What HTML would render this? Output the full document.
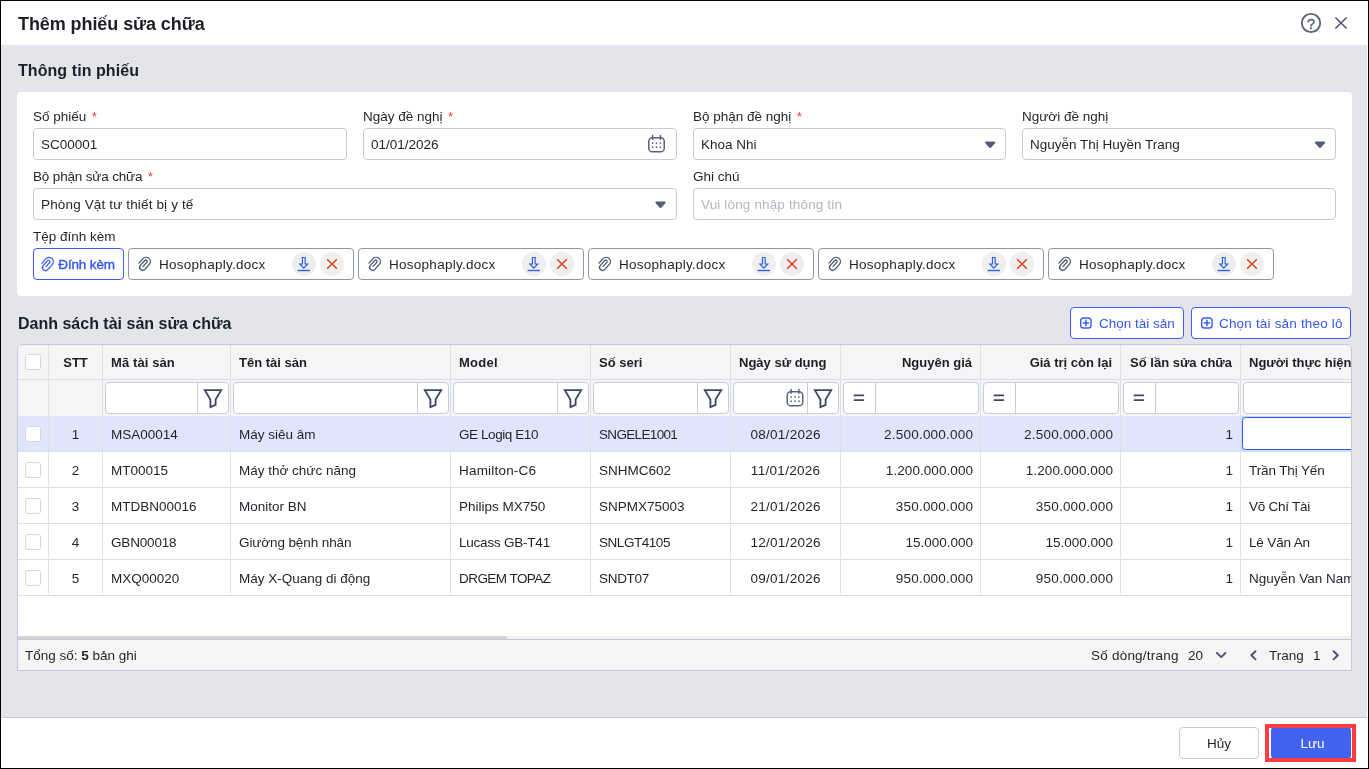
<!DOCTYPE html>
<html lang="vi">
<head>
<meta charset="utf-8">
<title>Thêm phiếu sửa chữa</title>
<style>
*{box-sizing:border-box;margin:0;padding:0}
html,body{width:1369px;height:769px;overflow:hidden;background:#fff}
body{font-family:"Liberation Sans",sans-serif;font-size:13.5px;color:#1f222b;position:relative}
.a{position:absolute}
svg{position:absolute;overflow:visible}
.frame{position:absolute;left:0;top:0;width:1369px;height:769px;border:1px solid #000;border-bottom-width:1px;pointer-events:none;z-index:50}
.title{position:absolute;left:18px;top:2px;height:44px;line-height:44px;font-size:18px;font-weight:bold;color:#1c1f26;white-space:nowrap;letter-spacing:-0.08px}
.gbody{position:absolute;left:1px;top:45px;width:1366px;height:673px;background:#e3e5ea;border-bottom:1px solid #c6cad6}
.sect{position:absolute;left:18px;margin-top:1px;font-size:16px;font-weight:bold;color:#1c1f26;white-space:nowrap;line-height:20px}
.card{position:absolute;left:17px;top:92px;width:1335px;height:204px;background:#fff;border-radius:4px}
.lbl{position:absolute;margin-top:1px;height:16px;line-height:16px;white-space:nowrap;color:#1f222b}
.lbl i{font-style:normal;color:#ee3b3b;margin-left:5.5px}
.inp{position:absolute;height:32px;border:1px solid #c7ccd9;border-radius:4px;background:#fff;line-height:30px;padding-left:7px;padding-top:1px;white-space:nowrap}
.ph{color:#b3b7c2}
.btn-o{position:absolute;height:32px;border:1px solid #3d5ef5;border-radius:4px;background:#fff;color:#3557ee;line-height:30px;white-space:nowrap}
.chip{position:absolute;top:248px;width:226px;height:32px;border:1px solid #8e96ae;border-radius:4px;background:#fff;line-height:30px;white-space:nowrap}
.chip .nm{position:absolute;left:30px;top:1px}
.chip .c1,.chip .c2{position:absolute;top:3px;width:24px;height:24px;border-radius:12px;background:#efefef}
.chip .c1{left:163px}.chip .c2{left:191px}
.btn{position:absolute;height:32px;border-radius:4px;text-align:center;line-height:30px;padding-top:1px}

.tbl{position:absolute;left:17px;top:344px;width:1335px;height:327px;border:1px solid #c3c9d6;border-radius:6px 6px 0 0;background:#fff;overflow:hidden}
.tbl>div{position:absolute}
.thbg{left:0;top:0;width:1335px;height:71px;background:#f5f5f5}
.selbg{left:0;top:71px;width:1335px;height:35px;background:#e1e5fb}
.hl{left:0;width:1335px;height:1px;background:#dbdfe9}
.hl.hd{background:#d9dde6}
.vl{top:0;width:1px;height:251px;background:#dee1e9}
.c{white-space:nowrap;overflow:hidden;padding-top:1px}
.tl{padding-left:8px;text-align:left}.tr{padding-right:7px;text-align:right}.tc{text-align:center}
.th{font-weight:bold;color:#1c1f26;font-size:13px}
.th.tr{padding-right:8px}
.cb{width:16px;height:16px;border:1px solid #d3d7e1;border-radius:2.5px;background:#fff}
.fi{height:32px;border:1px solid #c7ccd9;border-radius:4px;background:#fff}
.fi .dv{position:absolute;top:0;width:1px;height:30px;background:#c7ccd9}
.actbg{width:200px;height:35px;background:#c6defb}
.act{width:200px;height:33px;border:1.5px solid #3156ea;border-radius:3.5px;background:#fff}
.sbt{left:0;width:1335px;height:3px;background:#f0f0f1}
.sbh{left:0;width:489px;height:3px;background:#d2d2d2}
.tf{left:0;width:1335px;height:31px;border-top:1px solid #c3c9d6;background:#f5f5f5;line-height:31px;white-space:nowrap}
#root{position:absolute;left:0;top:0;width:1369px;height:769px;will-change:transform}
</style>
</head>
<body>
<div id="root">
<div class="title">Thêm phiếu sửa chữa</div>
<div class="gbody"></div>
<div class="sect" style="top:60px;letter-spacing:0.07px">Thông tin phiếu</div>
<div class="card"></div>
<!--FORM-->
<div class="lbl" style="left:33px;top:108px">Số phiếu<i>*</i></div>
<div class="lbl" style="left:363px;top:108px">Ngày đề nghị<i>*</i></div>
<div class="lbl" style="left:693px;top:108px">Bộ phận đề nghị<i>*</i></div>
<div class="lbl" style="left:1022px;top:108px">Người đề nghị</div>
<div class="inp" style="left:33px;top:128px;width:314px">SC00001</div>
<div class="inp" style="left:363px;top:128px;width:314px">01/01/2026</div>
<div class="inp" style="left:693px;top:128px;width:313px">Khoa Nhi</div>
<div class="inp" style="left:1022px;top:128px;width:314px">Nguyễn Thị Huyền Trang</div>
<div class="lbl" style="left:33px;top:168px;letter-spacing:-0.16px">Bộ phận sửa chữa<i>*</i></div>
<div class="lbl" style="left:693px;top:168px">Ghi chú</div>
<div class="inp" style="left:33px;top:188px;width:644px;letter-spacing:0.15px">Phòng Vật tư thiết bị y tế</div>
<div class="inp ph" style="left:693px;top:188px;width:643px;letter-spacing:0.15px">Vui lòng nhập thông tin</div>
<div class="lbl" style="left:33px;top:228px">Tệp đính kèm</div>
<div class="btn-o" style="left:33px;top:248px;width:91px;-webkit-text-stroke:0.4px #3557ee;letter-spacing:-0.15px"><span class="a" style="left:24.3px;top:1px">Đính kèm</span></div>
<div class="chip" style="left:128px"><span class="nm" style="letter-spacing:0.27px">Hosophaply.docx</span><span class="c1"></span><span class="c2"></span></div>
<div class="chip" style="left:358px"><span class="nm" style="letter-spacing:0.27px">Hosophaply.docx</span><span class="c1"></span><span class="c2"></span></div>
<div class="chip" style="left:588px"><span class="nm" style="letter-spacing:0.27px">Hosophaply.docx</span><span class="c1"></span><span class="c2"></span></div>
<div class="chip" style="left:818px"><span class="nm" style="letter-spacing:0.27px">Hosophaply.docx</span><span class="c1"></span><span class="c2"></span></div>
<div class="chip" style="left:1048px"><span class="nm" style="letter-spacing:0.27px">Hosophaply.docx</span><span class="c1"></span><span class="c2"></span></div>
<!--/FORM-->
<!--TABLE-->
<div class="sect" style="top:313px">Danh sách tài sản sửa chữa</div>
<div class="btn-o" style="left:1070px;top:307px;width:114px"><span class="a" style="left:28px;top:1px">Chọn tài sản</span></div>
<div class="btn-o" style="left:1191px;top:307px;width:160px"><span class="a" style="left:27px;top:1px;letter-spacing:0.18px">Chọn tài sản theo lô</span></div>
<div class="tbl">
<div class="thbg"></div>
<div class="selbg"></div>
<div class="hl hd" style="top:34px"></div>
<div class="hl" style="top:106px"></div>
<div class="hl" style="top:142px"></div>
<div class="hl" style="top:178px"></div>
<div class="hl" style="top:214px"></div>
<div class="hl" style="top:250px"></div>
<div class="vl" style="left:30px"></div>
<div class="vl" style="left:84px"></div>
<div class="vl" style="left:212px"></div>
<div class="vl" style="left:432px"></div>
<div class="vl" style="left:572px"></div>
<div class="vl" style="left:712px"></div>
<div class="vl" style="left:822px"></div>
<div class="vl" style="left:962px"></div>
<div class="vl" style="left:1102px"></div>
<div class="vl" style="left:1222px"></div>
<div class="c th tc" style="left:31px;top:0px;width:53px;height:34px;line-height:34px">STT</div>
<div class="c th tl" style="left:85px;top:0px;width:127px;height:34px;line-height:34px;letter-spacing:0.1px">Mã tài sản</div>
<div class="c th tl" style="left:213px;top:0px;width:219px;height:34px;line-height:34px">Tên tài sản</div>
<div class="c th tl" style="left:433px;top:0px;width:139px;height:34px;line-height:34px;letter-spacing:0.25px">Model</div>
<div class="c th tl" style="left:573px;top:0px;width:139px;height:34px;line-height:34px">Số seri</div>
<div class="c th tl" style="left:713px;top:0px;width:109px;height:34px;line-height:34px">Ngày sử dụng</div>
<div class="c th tr" style="left:823px;top:0px;width:139px;height:34px;line-height:34px">Nguyên giá</div>
<div class="c th tr" style="left:963px;top:0px;width:139px;height:34px;line-height:34px">Giá trị còn lại</div>
<div class="c th tr" style="left:1103px;top:0px;width:119px;height:34px;line-height:34px">Số lần sửa chữa</div>
<div class="c th tl" style="left:1223px;top:0px;width:159px;height:34px;line-height:34px">Người thực hiện</div>
<div class="cb" style="left:7px;top:9px"></div>
<div class="cb" style="left:7px;top:81px"></div>
<div class="c td tc" style="left:31px;top:71px;width:53px;height:35px;line-height:35px">1</div>
<div class="c td tl" style="left:85px;top:71px;width:127px;height:35px;line-height:35px">MSA00014</div>
<div class="c td tl" style="left:213px;top:71px;width:219px;height:35px;line-height:35px">Máy siêu âm</div>
<div class="c td tl" style="left:433px;top:71px;width:139px;height:35px;line-height:35px;letter-spacing:-0.42px">GE Logiq E10</div>
<div class="c td tl" style="left:573px;top:71px;width:139px;height:35px;line-height:35px;letter-spacing:-0.66px">SNGELE1001</div>
<div class="c td tc" style="left:713px;top:71px;width:109px;height:35px;line-height:35px;letter-spacing:0.28px;padding-left:0.28px">08/01/2026</div>
<div class="c td tr" style="left:823px;top:71px;width:139px;height:35px;line-height:35px;letter-spacing:0.22px;padding-right:6.78px">2.500.000.000</div>
<div class="c td tr" style="left:963px;top:71px;width:139px;height:35px;line-height:35px;letter-spacing:0.22px;padding-right:6.78px">2.500.000.000</div>
<div class="c td tr" style="left:1103px;top:71px;width:119px;height:35px;line-height:35px">1</div>
<div class="cb" style="left:7px;top:117px"></div>
<div class="c td tc" style="left:31px;top:107px;width:53px;height:35px;line-height:35px">2</div>
<div class="c td tl" style="left:85px;top:107px;width:127px;height:35px;line-height:35px">MT00015</div>
<div class="c td tl" style="left:213px;top:107px;width:219px;height:35px;line-height:35px">Máy thở chức năng</div>
<div class="c td tl" style="left:433px;top:107px;width:139px;height:35px;line-height:35px;letter-spacing:0.2px">Hamilton-C6</div>
<div class="c td tl" style="left:573px;top:107px;width:139px;height:35px;line-height:35px">SNHMC602</div>
<div class="c td tc" style="left:713px;top:107px;width:109px;height:35px;line-height:35px;letter-spacing:0.3px;padding-left:0.30px">11/01/2026</div>
<div class="c td tr" style="left:823px;top:107px;width:139px;height:35px;line-height:35px;letter-spacing:0.07px;padding-right:6.93px">1.200.000.000</div>
<div class="c td tr" style="left:963px;top:107px;width:139px;height:35px;line-height:35px;letter-spacing:0.07px;padding-right:6.93px">1.200.000.000</div>
<div class="c td tr" style="left:1103px;top:107px;width:119px;height:35px;line-height:35px">1</div>
<div class="c td tl" style="left:1223px;top:107px;width:159px;height:35px;line-height:35px;letter-spacing:-0.12px">Trần Thị Yến</div>
<div class="cb" style="left:7px;top:153px"></div>
<div class="c td tc" style="left:31px;top:143px;width:53px;height:35px;line-height:35px">3</div>
<div class="c td tl" style="left:85px;top:143px;width:127px;height:35px;line-height:35px">MTDBN00016</div>
<div class="c td tl" style="left:213px;top:143px;width:219px;height:35px;line-height:35px">Monitor BN</div>
<div class="c td tl" style="left:433px;top:143px;width:139px;height:35px;line-height:35px">Philips MX750</div>
<div class="c td tl" style="left:573px;top:143px;width:139px;height:35px;line-height:35px">SNPMX75003</div>
<div class="c td tc" style="left:713px;top:143px;width:109px;height:35px;line-height:35px;letter-spacing:0.28px;padding-left:0.28px">21/01/2026</div>
<div class="c td tr" style="left:823px;top:143px;width:139px;height:35px;line-height:35px;letter-spacing:0.22px;padding-right:6.78px">350.000.000</div>
<div class="c td tr" style="left:963px;top:143px;width:139px;height:35px;line-height:35px;letter-spacing:0.22px;padding-right:6.78px">350.000.000</div>
<div class="c td tr" style="left:1103px;top:143px;width:119px;height:35px;line-height:35px">1</div>
<div class="c td tl" style="left:1223px;top:143px;width:159px;height:35px;line-height:35px;letter-spacing:-0.26px">Võ Chí Tài</div>
<div class="cb" style="left:7px;top:189px"></div>
<div class="c td tc" style="left:31px;top:179px;width:53px;height:35px;line-height:35px">4</div>
<div class="c td tl" style="left:85px;top:179px;width:127px;height:35px;line-height:35px;letter-spacing:-0.17px">GBN00018</div>
<div class="c td tl" style="left:213px;top:179px;width:219px;height:35px;line-height:35px;letter-spacing:-0.1px">Giường bệnh nhân</div>
<div class="c td tl" style="left:433px;top:179px;width:139px;height:35px;line-height:35px;letter-spacing:-0.22px">Lucass GB-T41</div>
<div class="c td tl" style="left:573px;top:179px;width:139px;height:35px;line-height:35px;letter-spacing:-0.45px">SNLGT4105</div>
<div class="c td tc" style="left:713px;top:179px;width:109px;height:35px;line-height:35px;letter-spacing:0.28px;padding-left:0.28px">12/01/2026</div>
<div class="c td tr" style="left:823px;top:179px;width:139px;height:35px;line-height:35px">15.000.000</div>
<div class="c td tr" style="left:963px;top:179px;width:139px;height:35px;line-height:35px">15.000.000</div>
<div class="c td tr" style="left:1103px;top:179px;width:119px;height:35px;line-height:35px">1</div>
<div class="c td tl" style="left:1223px;top:179px;width:159px;height:35px;line-height:35px;letter-spacing:-0.15px">Lê Văn An</div>
<div class="cb" style="left:7px;top:225px"></div>
<div class="c td tc" style="left:31px;top:215px;width:53px;height:35px;line-height:35px">5</div>
<div class="c td tl" style="left:85px;top:215px;width:127px;height:35px;line-height:35px">MXQ00020</div>
<div class="c td tl" style="left:213px;top:215px;width:219px;height:35px;line-height:35px">Máy X-Quang di động</div>
<div class="c td tl" style="left:433px;top:215px;width:139px;height:35px;line-height:35px;letter-spacing:-0.55px">DRGEM TOPAZ</div>
<div class="c td tl" style="left:573px;top:215px;width:139px;height:35px;line-height:35px;letter-spacing:-0.3px">SNDT07</div>
<div class="c td tc" style="left:713px;top:215px;width:109px;height:35px;line-height:35px;letter-spacing:0.28px;padding-left:0.28px">09/01/2026</div>
<div class="c td tr" style="left:823px;top:215px;width:139px;height:35px;line-height:35px;letter-spacing:0.22px;padding-right:6.78px">950.000.000</div>
<div class="c td tr" style="left:963px;top:215px;width:139px;height:35px;line-height:35px;letter-spacing:0.22px;padding-right:6.78px">950.000.000</div>
<div class="c td tr" style="left:1103px;top:215px;width:119px;height:35px;line-height:35px">1</div>
<div class="c td tl" style="left:1223px;top:215px;width:159px;height:35px;line-height:35px">Nguyễn Van Nam</div>
<div class="fi" style="left:87px;top:37px;width:124px"><span class="dv" style="left:91px"></span></div>
<div class="fi" style="left:215px;top:37px;width:216px"><span class="dv" style="left:183px"></span></div>
<div class="fi" style="left:435px;top:37px;width:136px"><span class="dv" style="left:103px"></span></div>
<div class="fi" style="left:575px;top:37px;width:136px"><span class="dv" style="left:103px"></span></div>
<div class="fi" style="left:715px;top:37px;width:106px"><span class="dv" style="left:73px"></span></div>
<div class="fi" style="left:825px;top:37px;width:136px"><span class="dv" style="left:31px"></span></div>
<div class="fi" style="left:965px;top:37px;width:136px"><span class="dv" style="left:31px"></span></div>
<div class="fi" style="left:1105px;top:37px;width:116px"><span class="dv" style="left:31px"></span></div>
<div class="fi" style="left:1225px;top:37px;width:200px"></div>
<div class="actbg" style="left:1223px;top:71px"></div>
<div class="act" style="left:1224px;top:72px"></div>
<div class="sbt" style="top:291px"></div><div class="sbh" style="top:291px"></div>
<div class="tf" style="top:294px"><span class="a" style="left:7px">Tổng số: <b>5</b> bản ghi</span><span class="a" style="left:1073px;letter-spacing:0.22px">Số dòng/trang</span><span class="a" style="left:1170px">20</span><span class="a" style="left:1251px">Trang</span><span class="a" style="left:1295px">1</span></div>
</div>
<!--/TABLE-->
<!--FOOT-->
<div class="btn" style="left:1179px;top:727px;width:80px;border:1px solid #c7ccd9;background:#fff;color:#1f222b">Hủy</div>
<div class="btn" style="left:1271px;top:727px;width:80px;background:#4262f0;color:#fff;line-height:32px;padding-left:3px">Lưu</div>
<div class="a" style="left:1265px;top:724px;width:91px;height:38px;border:4px solid #fb3c40"></div>
<svg class="ov" width="1369" height="769" viewBox="0 0 1369 769" style="left:0;top:0;z-index:20" fill="none">
<circle cx="1311" cy="23" r="9.2" stroke="#5b6271" stroke-width="1.8"/>
<text x="1311" y="28.6" text-anchor="middle" font-family="Liberation Sans, sans-serif" font-size="14.5" fill="#5b6271" stroke="#5b6271" stroke-width="0.4">?</text>
<path d="M1335.4 17.4l11.2 11.2M1346.6 17.4l-11.2 11.2" stroke="#474e66" stroke-width="1.4"/>
<g transform="translate(648 137)"><g stroke="#59627d" stroke-width="1.5" stroke-linecap="round"><rect x="0.75" y="0.75" width="15.5" height="14" rx="3.6"/><path d="M4.6-1.4v3.6M12.4-1.4v3.6"/><path stroke-width="1.7" d="M4.6 6.1h.01M8.5 6.1h.01M12.4 6.1h.01M4.6 10.2h.01M8.5 10.2h.01M12.4 10.2h.01"/></g></g>
<g transform="translate(786.5 391)"><g stroke="#59627d" stroke-width="1.5" stroke-linecap="round"><rect x="0.75" y="0.75" width="15.5" height="14" rx="3.6"/><path d="M4.6-1.4v3.6M12.4-1.4v3.6"/><path stroke-width="1.7" d="M4.6 6.1h.01M8.5 6.1h.01M12.4 6.1h.01M4.6 10.2h.01M8.5 10.2h.01M12.4 10.2h.01"/></g></g>
<g transform="translate(990.2 144.7)"><path d="M-4.1-2.2h8.2L0 2.3z" fill="#555e77" stroke="#555e77" stroke-width="2" stroke-linejoin="round"/></g>
<g transform="translate(1320 144.7)"><path d="M-4.1-2.2h8.2L0 2.3z" fill="#555e77" stroke="#555e77" stroke-width="2" stroke-linejoin="round"/></g>
<g transform="translate(660.5 204.7)"><path d="M-4.1-2.2h8.2L0 2.3z" fill="#555e77" stroke="#555e77" stroke-width="2" stroke-linejoin="round"/></g>
<g transform="translate(47.2 263.8)" stroke="#3d5ef5"><path transform="rotate(42)" d="M-4.25 3.2V-2.8A4.25 4.25 0 0 1 4.25-2.8V3.9A3 3 0 0 1-1.75 3.9V-2.6A1.375 1.375 0 0 1 1-2.6V2.9" stroke-width="1.25" stroke-linecap="round"/></g>
<g transform="translate(144.3 263.6)" stroke="#4a5270"><path transform="rotate(42)" d="M-4.25 3.2V-2.8A4.25 4.25 0 0 1 4.25-2.8V3.9A3 3 0 0 1-1.75 3.9V-2.6A1.375 1.375 0 0 1 1-2.6V2.9" stroke-width="1.25" stroke-linecap="round"/></g>
<g transform="translate(303.8 264)"><g stroke="#2f60e6" stroke-width="1.2" stroke-linejoin="miter"><path d="M-1.35-6.5h2.7v6.5h2.6L0 4.2-3.95 0h2.6z"/><path d="M-6.2 6.5H6.2" stroke-width="1.4"/></g></g>
<g transform="translate(332 264)"><path d="M-4.8-4.8l9.6 9.6M4.8-4.8l-9.6 9.6" stroke="#e0391b" stroke-width="1.4"/></g>
<g transform="translate(374.3 263.6)" stroke="#4a5270"><path transform="rotate(42)" d="M-4.25 3.2V-2.8A4.25 4.25 0 0 1 4.25-2.8V3.9A3 3 0 0 1-1.75 3.9V-2.6A1.375 1.375 0 0 1 1-2.6V2.9" stroke-width="1.25" stroke-linecap="round"/></g>
<g transform="translate(533.8 264)"><g stroke="#2f60e6" stroke-width="1.2" stroke-linejoin="miter"><path d="M-1.35-6.5h2.7v6.5h2.6L0 4.2-3.95 0h2.6z"/><path d="M-6.2 6.5H6.2" stroke-width="1.4"/></g></g>
<g transform="translate(562 264)"><path d="M-4.8-4.8l9.6 9.6M4.8-4.8l-9.6 9.6" stroke="#e0391b" stroke-width="1.4"/></g>
<g transform="translate(604.3 263.6)" stroke="#4a5270"><path transform="rotate(42)" d="M-4.25 3.2V-2.8A4.25 4.25 0 0 1 4.25-2.8V3.9A3 3 0 0 1-1.75 3.9V-2.6A1.375 1.375 0 0 1 1-2.6V2.9" stroke-width="1.25" stroke-linecap="round"/></g>
<g transform="translate(763.8 264)"><g stroke="#2f60e6" stroke-width="1.2" stroke-linejoin="miter"><path d="M-1.35-6.5h2.7v6.5h2.6L0 4.2-3.95 0h2.6z"/><path d="M-6.2 6.5H6.2" stroke-width="1.4"/></g></g>
<g transform="translate(792 264)"><path d="M-4.8-4.8l9.6 9.6M4.8-4.8l-9.6 9.6" stroke="#e0391b" stroke-width="1.4"/></g>
<g transform="translate(834.3 263.6)" stroke="#4a5270"><path transform="rotate(42)" d="M-4.25 3.2V-2.8A4.25 4.25 0 0 1 4.25-2.8V3.9A3 3 0 0 1-1.75 3.9V-2.6A1.375 1.375 0 0 1 1-2.6V2.9" stroke-width="1.25" stroke-linecap="round"/></g>
<g transform="translate(993.8 264)"><g stroke="#2f60e6" stroke-width="1.2" stroke-linejoin="miter"><path d="M-1.35-6.5h2.7v6.5h2.6L0 4.2-3.95 0h2.6z"/><path d="M-6.2 6.5H6.2" stroke-width="1.4"/></g></g>
<g transform="translate(1022 264)"><path d="M-4.8-4.8l9.6 9.6M4.8-4.8l-9.6 9.6" stroke="#e0391b" stroke-width="1.4"/></g>
<g transform="translate(1064.3 263.6)" stroke="#4a5270"><path transform="rotate(42)" d="M-4.25 3.2V-2.8A4.25 4.25 0 0 1 4.25-2.8V3.9A3 3 0 0 1-1.75 3.9V-2.6A1.375 1.375 0 0 1 1-2.6V2.9" stroke-width="1.25" stroke-linecap="round"/></g>
<g transform="translate(1223.8 264)"><g stroke="#2f60e6" stroke-width="1.2" stroke-linejoin="miter"><path d="M-1.35-6.5h2.7v6.5h2.6L0 4.2-3.95 0h2.6z"/><path d="M-6.2 6.5H6.2" stroke-width="1.4"/></g></g>
<g transform="translate(1252 264)"><path d="M-4.8-4.8l9.6 9.6M4.8-4.8l-9.6 9.6" stroke="#e0391b" stroke-width="1.4"/></g>
<g transform="translate(1085.9 323)"><g stroke="#3d5ef5" stroke-width="1.4" stroke-linecap="round"><rect x="-5.2" y="-5" width="10.4" height="10" rx="2.8"/><path d="M-2.6 0h5.2M0-2.6v5.2" stroke-width="1.6"/></g></g>
<g transform="translate(1206.9 323)"><g stroke="#3d5ef5" stroke-width="1.4" stroke-linecap="round"><rect x="-5.2" y="-5" width="10.4" height="10" rx="2.8"/><path d="M-2.6 0h5.2M0-2.6v5.2" stroke-width="1.6"/></g></g>
<g transform="translate(213 398.5)"><path d="M-8.2-8.4h16.4L2.6 1v5.4l-5.2 2.2V1z" stroke="#3e4661" stroke-width="1.8" stroke-linejoin="miter"/></g>
<g transform="translate(433 398.5)"><path d="M-8.2-8.4h16.4L2.6 1v5.4l-5.2 2.2V1z" stroke="#3e4661" stroke-width="1.8" stroke-linejoin="miter"/></g>
<g transform="translate(573 398.5)"><path d="M-8.2-8.4h16.4L2.6 1v5.4l-5.2 2.2V1z" stroke="#3e4661" stroke-width="1.8" stroke-linejoin="miter"/></g>
<g transform="translate(713 398.5)"><path d="M-8.2-8.4h16.4L2.6 1v5.4l-5.2 2.2V1z" stroke="#3e4661" stroke-width="1.8" stroke-linejoin="miter"/></g>
<g transform="translate(823 398.5)"><path d="M-8.2-8.4h16.4L2.6 1v5.4l-5.2 2.2V1z" stroke="#3e4661" stroke-width="1.8" stroke-linejoin="miter"/></g>
<g transform="translate(853.7 395.3)"><path d="M0 0h10.4M0 4.9h10.4" stroke="#3e4661" stroke-width="1.7"/></g>
<g transform="translate(993.7 395.3)"><path d="M0 0h10.4M0 4.9h10.4" stroke="#3e4661" stroke-width="1.7"/></g>
<g transform="translate(1133.7 395.3)"><path d="M0 0h10.4M0 4.9h10.4" stroke="#3e4661" stroke-width="1.7"/></g>
<path d="M1217 653l4.2 4.2 4.2-4.2M1255.5 651.2l-4.2 4.1 4.2 4.1M1333.6 651.2l4.2 4.1-4.2 4.1" stroke="#4a5473" stroke-width="1.9" stroke-linecap="round" stroke-linejoin="round"/>
</svg>
<!--/FOOT-->
<div class="frame"></div>
</div>
</body>
</html>
